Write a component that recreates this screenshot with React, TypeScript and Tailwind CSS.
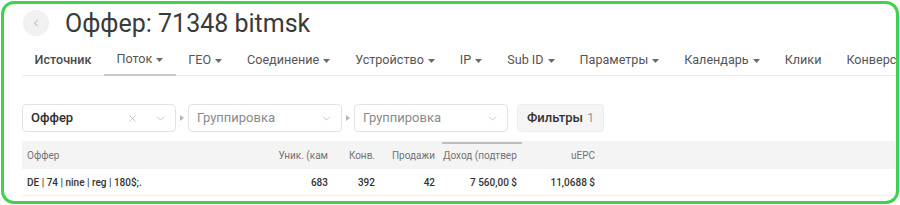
import { ChevronDown, ChevronLeft, X } from "lucide-react";

const tabs = [
  { label: "Источник", caret: false },
  { label: "Поток", caret: true, active: true },
  { label: "ГЕО", caret: true },
  { label: "Соединение", caret: true },
  { label: "Устройство", caret: true },
  { label: "IP", caret: true },
  { label: "Sub ID", caret: true },
  { label: "Параметры", caret: true },
  { label: "Календарь", caret: true },
  { label: "Клики", caret: false },
  { label: "Конверсии", caret: false },
];

function Caret() {
  return (
    <svg width="7" height="4" viewBox="0 0 7 4" className="ml-[4px] mt-[1px] shrink-0">
      <path d="M0 0h7L3.5 4z" fill="#6b6b6b" />
    </svg>
  );
}

function Sep() {
  return (
    <svg width="4" height="6" viewBox="0 0 4 6" className="mx-[4px] shrink-0">
      <path d="M0 0l4 3-4 3z" fill="#b5b5b5" />
    </svg>
  );
}

function Select({ value, placeholder, clearable }: { value?: string; placeholder?: string; clearable?: boolean }) {
  return (
    <div className="flex h-[28px] w-[154px] shrink-0 items-center rounded-[4px] border border-[#e3e3e3] bg-white pl-[8px] pr-[8px]">
      <span
        className={
          value
            ? "flex-1 text-[13px] font-medium text-[#2e2e2e]"
            : "flex-1 text-[13px] text-[#8a8a8a]"
        }
      >
        {value ?? placeholder}
      </span>
      {clearable ? <X className="mr-[16px] h-[11px] w-[11px] stroke-[1.6] text-[#b8b8b8]" /> : null}
      <ChevronDown className="h-[13px] w-[13px] stroke-[1.4] text-[#b8b8b8]" />
    </div>
  );
}

const cols = "grid grid-cols-[218px_95px_47px_60px_82px_78px_1fr]";

export default function App() {
  return (
    <div className="h-[205px] w-[900px] bg-white p-[1px] font-['Roboto',sans-serif]">
      <div className="h-[203px] w-[898px] overflow-hidden rounded-[13px] border-[3px] border-[#3fd24e] bg-white">
        <div className="pl-[18px]">
          {/* header */}
          <div className="flex h-[36px] items-center pt-[2px]">
            <div className="ml-[1px] flex h-[26px] w-[26px] items-center justify-center rounded-full bg-[#f1f1f1]">
              <ChevronLeft className="h-[12px] w-[12px] stroke-[1.6] text-[#9a9a9a]" />
            </div>
            <h1 className="ml-[16px] text-[25px] leading-none text-[#3a3a3a]">Оффер: 71348 bitmsk</h1>
          </div>

          {/* tabs */}
          <div className="mt-[3px] flex h-[33px] border-b border-[#ececec] whitespace-nowrap">
            {tabs.map((t) => (
              <div
                key={t.label}
                className={
                  t.active
                    ? "-mb-px flex items-center border-b-2 border-[#c9c9c9] px-[12.5px] pt-[2px] text-[12.6px] text-[#555]"
                    : "flex items-center px-[12.5px] pt-[2px] text-[12.6px] text-[#555]"
                }
              >
                <span className={t.label === "Источник" ? "font-medium text-[#4a4a4a]" : ""}>{t.label}</span>
                {t.caret ? <Caret /> : null}
              </div>
            ))}
          </div>

          {/* grouping */}
          <div className="mt-[28px] flex items-center">
            <Select value="Оффер" clearable />
            <Sep />
            <Select placeholder="Группировка" />
            <Sep />
            <Select placeholder="Группировка" />
            <div className="ml-[9px] flex h-[28px] items-center rounded-[4px] border border-[#ececec] bg-[#f5f5f5] px-[9px] text-[13px]">
              <span className="font-medium text-[#333]">Фильтры</span>
              <span className="ml-[4px] text-[#9a9a9a]">1</span>
            </div>
          </div>

          {/* table */}
          <div className="mt-[9px] text-[10px]">
            <div className={`${cols} h-[28px] items-center bg-[#f4f4f4] text-[#737373]`}>
              <div className="pl-[5px]">Оффер</div>
              <div className="pr-[7px] text-right">Уник. (кам</div>
              <div className="pr-[7px] text-right">Конв.</div>
              <div className="pr-[7px] text-right">Продажи</div>
              <div className="relative flex h-full items-center overflow-hidden whitespace-nowrap pl-[1px]">
                <div className="absolute left-0 right-[2px] top-[1px] h-[2px] bg-[#bdbdbd]" />
                Доход (подтвер
              </div>
              <div className="pr-[7px] text-right">uEPC</div>
              <div />
            </div>
            <div className={`${cols} h-[27px] items-center border-b border-[#efefef] font-medium text-[#333]`}>
              <div className="pl-[5px]">DE | 74 | nine | reg | 180$;.</div>
              <div className="pr-[7px] text-right">683</div>
              <div className="pr-[7px] text-right">392</div>
              <div className="pr-[7px] text-right">42</div>
              <div className="pr-[7px] text-right">7 560,00 $</div>
              <div className="pr-[7px] text-right">11,0688 $</div>
              <div />
            </div>
          </div>
        </div>
      </div>
    </div>
  );
}
